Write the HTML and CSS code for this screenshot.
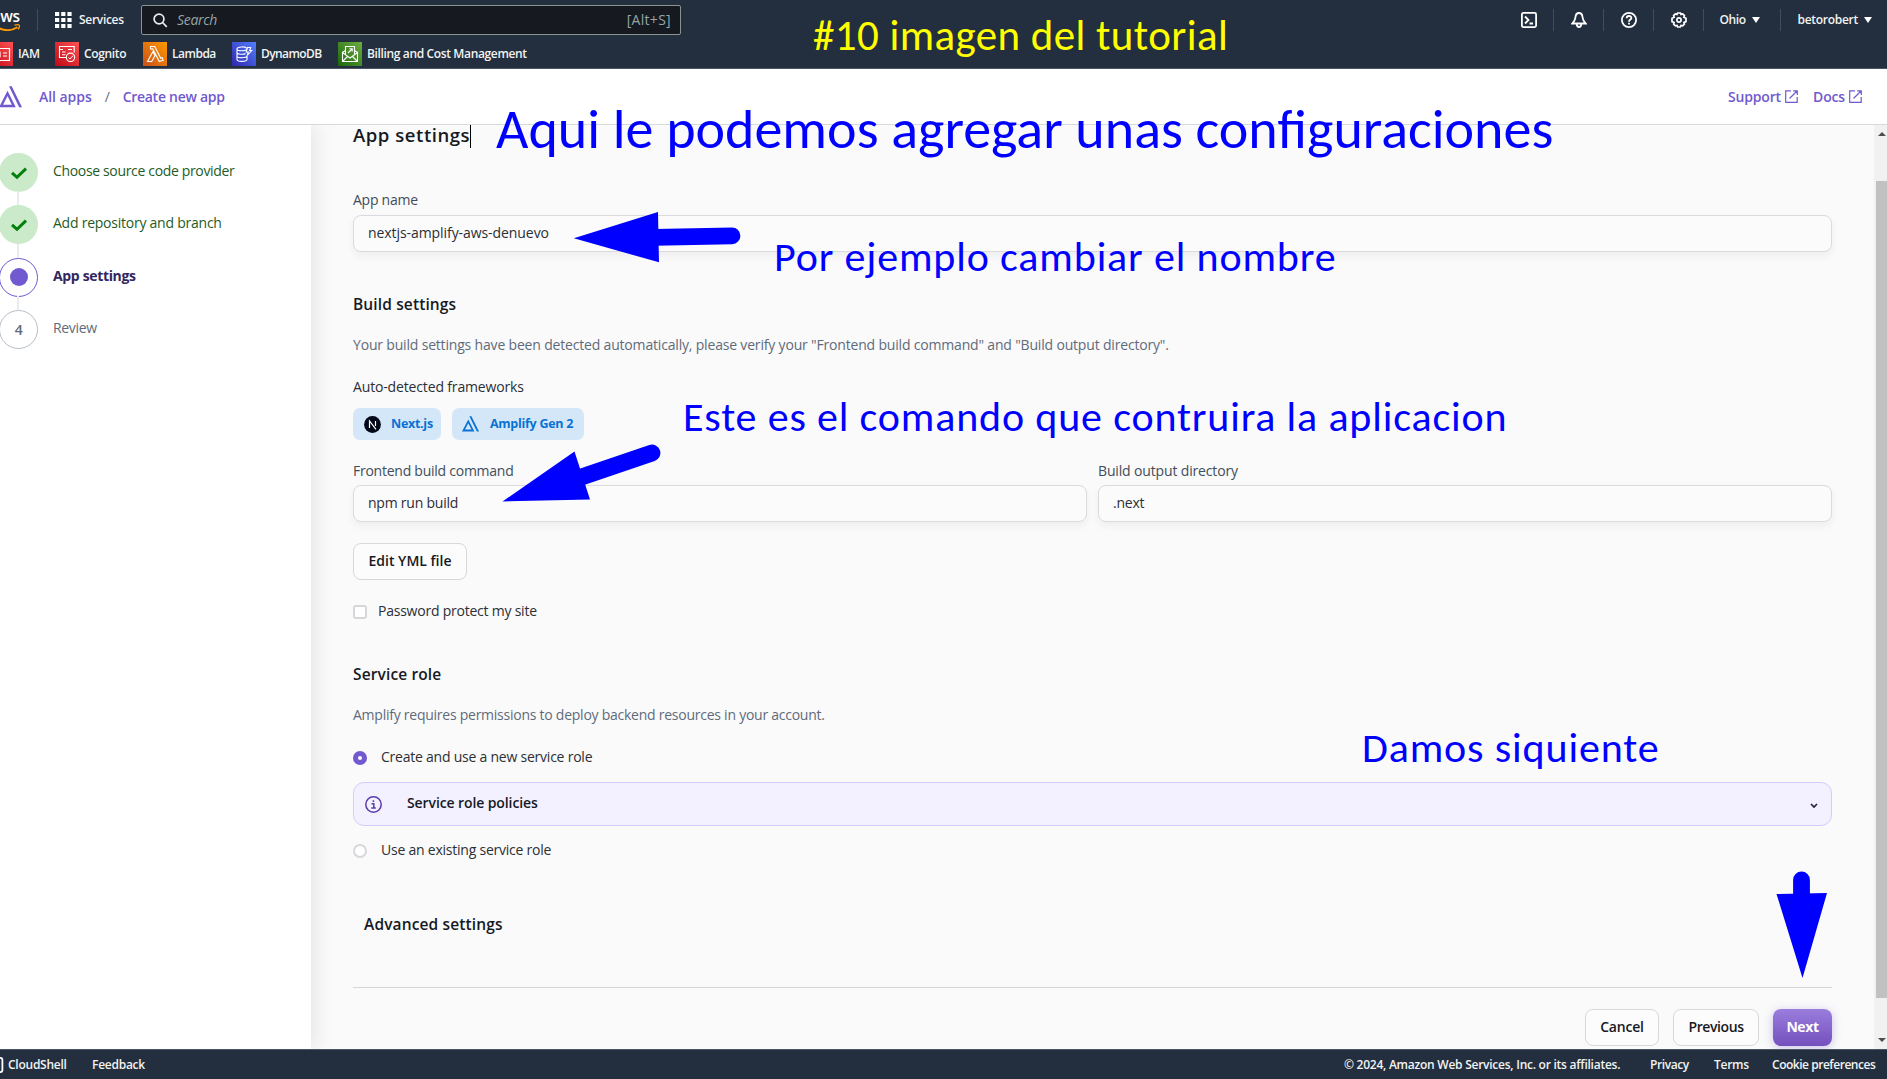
FILE: index.html
```html
<!DOCTYPE html>
<html lang="en">
<head>
<meta charset="utf-8">
<title>AWS Amplify - Create new app</title>
<link rel="stylesheet" href="styles.css">
</head>
<body>
<svg class="defs" aria-hidden="true">
  <defs>
    <linearGradient id="red" x1="0" y1="1" x2="1" y2="0"><stop stop-color="#bd0816"/><stop offset="1" stop-color="#ff5252"/></linearGradient>
    <linearGradient id="orange" x1="0" y1="1" x2="1" y2="0"><stop stop-color="#c8511b"/><stop offset="1" stop-color="#ff9900"/></linearGradient>
    <linearGradient id="blue" x1="0" y1="1" x2="1" y2="0"><stop stop-color="#2e27ad"/><stop offset="1" stop-color="#527fff"/></linearGradient>
    <linearGradient id="green" x1="0" y1="1" x2="1" y2="0"><stop stop-color="#1b660f"/><stop offset="1" stop-color="#6cae3e"/></linearGradient>
    <symbol id="external" viewBox="0 0 13 13"><path d="M6 .8H.7v11.5h11.5V7M8 .8h4.3V5M12 1 4.5 8.5" fill="none" stroke="currentColor" stroke-width="1.2"/></symbol>
    <symbol id="check" viewBox="0 0 18 14"><path d="M2 6.8 7 11.3 16 2.6" fill="none" stroke="#037f0c" stroke-width="3"/></symbol>
    <symbol id="amplify" viewBox="0 0 17 16" preserveAspectRatio="none"><path d="M7.400.2h2L17 15.500h-2.100ZM6.300 3.500 12.400 15.500H0ZM6.300 7.300 3 13.600H9.500Z" fill="currentColor" fill-rule="evenodd"/></symbol>
  </defs>
</svg>

<header class="top">
  <div class="bar">
    <svg class="logo" width="21" height="20" viewBox="0 0 21 20"><text x="19.5" y="10.5" text-anchor="end" class="logo-text">aws</text><path d="M-4 15.5C3 20 11 20 17.5 16.2" fill="none" stroke="#f90" stroke-width="1.9"/><path d="M14.5 14.2c2-.6 4-.6 4.6-.1.6.6.1 2.700-1.100 4.300" fill="none" stroke="#f90" stroke-width="1.300"/></svg>
    <i class="sep"></i>
    <svg class="grid-icon" width="17" height="16" viewBox="0 0 17 16" fill="#fff"><path d="M0 0h4.200v4H0zM6.200 0h4.200v4H6.200zM12.400 0h4.200v4h-4.200zM0 6h4.200v4H0zM6.200 6h4.200v4H6.200zM12.400 6h4.200v4h-4.200zM0 12h4.200v4H0zM6.200 12h4.200v4H6.200zM12.400 12h4.200v4h-4.200z"/></svg>
    <span class="services">Services</span>
    <div class="search">
      <svg width="15" height="15" viewBox="0 0 15 15" fill="none" stroke="#eaeded" stroke-width="1.700"><circle cx="6" cy="6" r="4.900"/><path d="m9.500 9.500 4.300 4.300"/></svg>
      <em>Search</em><span>[Alt+S]</span>
    </div>
    <nav class="tools">
      <svg width="16" height="16" viewBox="0 0 16 16" fill="none" stroke="#fff" stroke-width="1.800"><rect x=".9" y=".9" width="14.200" height="14.200" rx="1.500"/><path d="M4 4.500 7.500 8 4 11.500M8.500 11.500H12"/></svg>
      <i class="sep"></i>
      <svg width="16" height="16" viewBox="0 0 16 16" fill="none" stroke="#fff" stroke-width="1.800"><path d="M8 1C5.500 1 4.600 3 4.400 5.500 4.200 8 3.200 9.500 1.300 11.500h13.400c-1.900-2-2.900-3.500-3.100-6C11.400 3 10.500 1 8 1Z"/><path d="M5.800 12c0 4 4.400 4 4.400 0"/></svg>
      <i class="sep"></i>
      <svg width="16" height="16" viewBox="0 0 16 16" fill="none" stroke="#fff" stroke-width="1.800"><circle cx="8" cy="8" r="7.100"/><path d="M5.700 6.300C5.700 3.200 10.400 3.400 10.400 6 10.400 7.600 8 7.600 8 9.700M8 10.800v1.800"/></svg>
      <i class="sep"></i>
      <svg width="16" height="16" viewBox="0 0 16 16" fill="none" stroke="#fff" stroke-width="1.700"><path d="M6.600 1h2.800l.6 1.400 1.700-.5 1.700 1.700-.5 1.700 2.100.9v3.400l-2.100.8.5 1.700-1.700 1.700-1.700-.4-.7 1.600H6.600L6 13.400l-1.700.4-1.700-1.700.5-1.700L1 9.600V6.200l2.100-.9-.5-1.700L4.300 1.900 6 2.400Z"/><circle cx="8" cy="8" r="2.100"/></svg>
      <i class="sep"></i>
      <span class="menu region">Ohio<b></b></span>
      <i class="sep"></i>
      <span class="menu user">betorobert<b></b></span>
    </nav>
  </div>
  <div class="favorites">
    <a class="fav iam"><svg width="24" height="24" viewBox="0 0 24 24"><path fill="url(#red)" d="M0 0h24v24H0z"/><path d="M4 6.500h16.500v12H4zM7 10h4v5H7zM14 11h4M14 14h4" fill="none" stroke="#fff" stroke-width="1.200"/></svg>IAM</a>
    <a class="fav cognito"><svg width="24" height="24" viewBox="0 0 24 24"><path fill="url(#red)" d="M0 0h24v24H0z"/><path d="M11.500 15.500h-7v-11h14.700v6M4.500 7.500H8M7 10h3.500M7 12.700h3.500M13 7.500h4" fill="none" stroke="#fff" stroke-width="1.100"/><circle cx="15.500" cy="15.300" r="4.200" fill="none" stroke="#fff" stroke-width="1.100"/><path d="m13.500 15.500 1.500 1.500 3-3.300" fill="none" stroke="#fff"/></svg>Cognito</a>
    <a class="fav lambda"><svg width="24" height="24" viewBox="0 0 24 24"><path fill="url(#orange)" d="M0 0h24v24H0z"/><path d="M4.500 19.500 10 9.500l2 4.200-3.300 5.800ZM7.500 4.500h4.200l6 11.800 1.500-.6 1 2.500-3.900 1.300-6.600-12.600H7.500Z" fill="none" stroke="#fff" stroke-width="1.100"/></svg>Lambda</a>
    <a class="fav dynamo"><svg width="24" height="24" viewBox="0 0 24 24"><path fill="url(#blue)" d="M0 0h24v24H0z"/><g fill="none" stroke="#fff" stroke-width="1.100"><path d="M14.500 7C14.500 9.300 5 9.300 5 7S14 4 14.500 6.500M5 7v10.500c0 2.500 10 2.500 10 0v-4M5 10.500c0 2 7 2.300 8.500 1M5 14c0 2.300 10 2.300 10 0"/><path d="M15.500 5.500h3.200l-1 3h2l-4.500 5 1-3.500h-2z"/></g></svg>DynamoDB</a>
    <a class="fav billing"><svg width="24" height="24" viewBox="0 0 24 24"><path fill="url(#green)" d="M0 0h24v24H0z"/><g fill="none" stroke="#fff" stroke-width="1.100"><path d="M7.500 12.500v-8h9v8M4.500 10.500v9h15v-9L12 16ZM4.500 19.500l5-5M19.500 19.500l-5-5M10 11l4-4M11.500 6.800h2.700v2.700M7.500 8.500l-3 2M16.500 8.500l3 2"/></g></svg>Billing and Cost Management</a>
  </div>
</header>

<div class="crumbs">
  <svg class="amplify" width="23" height="22"><use href="#amplify"/></svg>
  <a class="all">All apps</a><i>/</i><a class="create">Create new app</a>
  <div class="links"><a>Support<svg width="13" height="13"><use href="#external"/></svg></a><a>Docs<svg width="13" height="13"><use href="#external"/></svg></a></div>
</div>

<div class="body">
  <aside>
    <ol class="steps">
      <li class="done"><span class="dot"><svg width="18" height="14"><use href="#check"/></svg></span>Choose source code provider</li>
      <li class="done"><span class="dot"><svg width="18" height="14"><use href="#check"/></svg></span>Add repository and branch</li>
      <li class="current"><span class="dot"><i></i></span>App settings</li>
      <li class="todo"><span class="dot">4</span>Review</li>
    </ol>
  </aside>
  <main>
    <h1>App settings<i class="caret"></i></h1>
    <div class="label name">App name</div>
    <div class="input full">nextjs-amplify-aws-denuevo</div>
    <h2 class="build">Build settings</h2>
    <p class="desc">Your build settings have been detected automatically, please verify your "Frontend build command" and "Build output directory".</p>
    <div class="auto">Auto-detected frameworks</div>
    <div class="badges">
      <span class="badge next"><svg width="17" height="17" viewBox="0 0 17 17"><circle cx="8.500" cy="8.500" r="8.400" fill="#000716"/><path d="M5.500 12V5l6.500 8.300M11.500 5v5" fill="none" stroke="#fff" stroke-width="1.200"/></svg>Next.js</span>
      <span class="badge gen"><svg width="17" height="16"><use href="#amplify"/></svg>Amplify Gen 2</span>
    </div>
    <div class="columns">
      <div><div class="label">Frontend build command</div><div class="input command">npm run build</div></div>
      <div><div class="label output">Build output directory</div><div class="input command">.next</div></div>
    </div>
    <button class="btn edit">Edit YML file</button>
    <div class="option protect"><i class="box"></i>Password protect my site</div>
    <h2 class="role">Service role</h2>
    <p class="desc perms">Amplify requires permissions to deploy backend resources in your account.</p>
    <div class="option radio first"><i class="on"></i>Create and use a new service role</div>
    <div class="alert">
      <svg width="17" height="17" viewBox="0 0 17 17" fill="none" stroke="#5c3ba8" stroke-width="1.500"><circle cx="8.500" cy="8.500" r="7.700"/><path d="M6.500 7.800h2.300v4M6.300 12h4.500M8.400 4.300v1.700"/></svg>
      <span>Service role policies</span>
      <svg class="chev" width="8" height="6" viewBox="0 0 8 6"><path d="m1 1 3 3 3-3" fill="none" stroke="#23203a" stroke-width="1.700"/></svg>
    </div>
    <div class="option radio second"><i></i>Use an existing service role</div>
    <h2 class="advanced">Advanced settings</h2>
    <hr>
    <div class="actions"><button class="btn cancel">Cancel</button><button class="btn prev">Previous</button><button class="btn primary">Next</button></div>
  </main>
  <div class="scroll"><i class="up"></i><b></b><i class="down"></i></div>
</div>

<footer>
  <svg width="4" height="16" viewBox="12 0 4 16" fill="none" stroke="#fff" stroke-width="1.800"><rect x=".9" y=".9" width="13.500" height="14.200" rx="2"/></svg>
  <span class="shell">CloudShell</span><span>Feedback</span>
  <div class="legal"><span class="copy">© 2024, Amazon Web Services, Inc. or its affiliates.</span><span class="privacy">Privacy</span><span class="terms">Terms</span><span class="cookie">Cookie preferences</span></div>
</footer>

<div class="note title">#10 imagen del tutorial</div>
<div class="note n1">Aqui le podemos agregar unas configuraciones</div>
<div class="note n2">Por ejemplo cambiar el nombre</div>
<div class="note n3">Este es el comando que contruira la aplicacion</div>
<div class="note n4">Damos siquiente</div>
<svg class="arrows" viewBox="0 0 1887 1079" fill="#00f" stroke="#00f">
  <g stroke="none"><path d="M573.800 238.300 658 212l1 50.300ZM502.500 501.500l72-50 15.500 48ZM1802.500 978l-26-84 50.500-1Z"/></g>
  <path d="m655 237.300 77-1.500M580 477.500l72-24.500M1801.500 896v-16" stroke-width="16.800" stroke-linecap="round"/>
</svg>
</body>
</html>
```
FILE: styles.css
```css
* { box-sizing: border-box; }
body {
  margin: 0;
  width: 1887px;
  height: 1079px;
  overflow: hidden;
  position: relative;
  display: flex;
  flex-direction: column;
  font: 400 14px/20px "Open Sans", "Noto Sans", sans-serif;
  letter-spacing: -0.18px;
  color: #2b2f36;
  background: #fff;
}
svg { flex: none; display: block; }
.defs { position: absolute; width: 0; height: 0; }
h1, h2, p, ol { margin: 0; padding: 0; }

/* Console header */
.top {
  height: 69px;
  flex: none;
  background: #232f3e;
  border-bottom: 1px solid #4b5563;
  color: #f2f3f3;
  font-size: 12px;
  font-weight: 600;
  letter-spacing: -0.36px;
}
.bar { height: 40px; display: flex; align-items: center; }
.sep { width: 1px; height: 22px; background: #414d5c; flex: none; }
.logo { margin: 2px 16px 0 0; overflow: hidden; }
.logo-text { font: 600 15.500px "Open Sans", sans-serif; letter-spacing: -0.5px; fill: #fff; }
.grid-icon { margin-left: 17px; }
.services { margin-left: 7px; width: 62px; letter-spacing: -0.3px; }
.search {
  width: 540px;
  height: 30px;
  display: flex;
  align-items: center;
  padding: 0 9px 0 11px;
  background: #161920;
  border: 1px solid #87958f;
  border-radius: 2px;
  font-size: 14px;
  font-weight: 400;
  color: #95a5a6;
}
.search em { margin-left: 9px; letter-spacing: -0.3px; }
.search span { margin-left: auto; letter-spacing: 0.3px; }
.tools { margin-left: auto; display: flex; align-items: center; padding-right: 15px; }
.tools svg + .sep { margin: 0 17px 0 16px; }
.tools svg:nth-of-type(4) + .sep { margin-right: 0; }
.menu { display: flex; align-items: center; }
.menu b { border: 4px solid transparent; border-top: 6px solid #fff; border-bottom: 0; margin-left: 6px; }
.region { padding-left: 16px; width: 76px; }
.user { padding-left: 17px; letter-spacing: -0.28px; }
.favorites { display: flex; height: 28px; align-items: center; }
.fav { display: flex; align-items: center; gap: 5px; }
.iam { margin-left: -11px; width: 66px; }
.cognito { width: 88px; }
.lambda { width: 89px; letter-spacing: -0.5px; }
.dynamo { width: 106px; letter-spacing: -0.6px; }

/* Breadcrumbs */
.crumbs {
  height: 56px;
  flex: none;
  display: flex;
  align-items: center;
  border-bottom: 1px solid #d5dbdb;
  color: #7159cf;
  font-weight: 600;
}
.amplify { margin-left: -1px; }
.crumbs .all { margin-left: 17px; letter-spacing: -0.05px; }
.crumbs i { font-style: normal; font-weight: 400; color: #687078; margin: 0 13px; }
.crumbs .create { letter-spacing: -0.28px; }
.links { margin-left: auto; padding-right: 25px; display: flex; gap: 15px; letter-spacing: -0.15px; }
.links a { display: flex; align-items: center; gap: 4px; }

/* Page body */
.body { height: 924px; flex: none; display: flex; overflow: hidden; background: #fafafa; }
aside { width: 311px; background: #fff; box-shadow: 4px 0 20px rgba(0, 0, 0, 0.09); padding-top: 28px; }
.steps { list-style: none; margin-left: -1px; }
.steps li { height: 52.400px; display: flex; gap: 15px; letter-spacing: -0.34px; line-height: 35px; position: relative; }
.steps li:nth-child(2) { letter-spacing: -0.24px; }
.steps li + li::before { content: ""; position: absolute; left: 18px; top: -14px; width: 2px; height: 14px; background: #e9ebed; }
.dot { width: 39px; height: 39px; border-radius: 50%; display: flex; align-items: center; justify-content: center; }
.done { color: #1d5c25; }
.done .dot { background: #caeaca; }
.current { color: #33265f; font-weight: 700; }
.current .dot { border: 1px solid #7159cf; }
.current .dot i { width: 18px; height: 18px; border-radius: 50%; background: #7159cf; }
.todo { color: #5f6b7a; }
.todo .dot { border: 1px solid #b6bec9; font-weight: 600; }

main { flex: none; width: 1521px; padding-left: 42px; }
h1 { height: 21px; font-size: 18.500px; line-height: 19px; font-weight: 600; letter-spacing: 0.55px; color: #16191f; display: flex; }
.caret { width: 1px; height: 23px; flex: none; background: #000; }
h2 { font-size: 15.500px; line-height: 20px; font-weight: 600; letter-spacing: 0.13px; color: #16191f; }
.label { color: #414d5c; letter-spacing: -0.25px; }
.output { letter-spacing: -0.15px; }
.name { margin-top: 44px; }
.input {
  height: 37px;
  margin-top: 4px;
  padding-left: 14px;
  line-height: 34px;
  border: 1px solid #d9dbde;
  border-radius: 8px;
  background: #fbfbfb;
  box-shadow: 0 4px 8px rgba(0, 0, 0, 0.05);
  letter-spacing: -0.07px;
}
.command { letter-spacing: -0.23px; }
.full { margin-top: 5px; }
.build { margin-top: 42px; }
.desc { margin-top: 21px; color: #5f6b7a; }
.perms { letter-spacing: -0.25px; }
.auto { margin-top: 22px; letter-spacing: -0.15px; }
.badges { display: flex; gap: 11px; margin-top: 11px; }
.badge { height: 32px; display: flex; align-items: center; background: #d3e7f9; border-radius: 7px; color: #0972d3; font-size: 12.500px; font-weight: 700; letter-spacing: -0.28px; }
.next { width: 88px; padding-left: 11px; gap: 10px; }
.gen { width: 132px; padding-left: 10px; gap: 11px; }
.columns { display: grid; grid-template-columns: 1fr 1fr; gap: 11px; margin-top: 21px; }
.btn { height: 37px; padding: 0 0 2px; border: 1px solid #d5d9dc; border-radius: 8px; background: #fcfcfc; font: inherit; font-weight: 600; letter-spacing: 0; color: #16191f; }
.edit { display: block; width: 114px; margin-top: 21px; }
.option { display: flex; align-items: center; letter-spacing: -0.23px; }
.option i { width: 14px; height: 14px; border: 2px solid #d5d7da; border-radius: 3px; background: #fff; margin-top: 2px; }
.protect { margin-top: 21px; gap: 11px; }
.radio { gap: 14px; }
.radio i { border-radius: 50%; }
.radio .on { border: 5px solid #7159cf; }
.role { margin-top: 43px; }
.first { margin-top: 22px; }
.alert {
  height: 44px;
  margin-top: 15px;
  padding: 0 13px 0 11px;
  display: flex;
  align-items: center;
  background: #f3f1ff;
  border: 1px solid #d4cdfa;
  border-radius: 11px;
  font-weight: 600;
  letter-spacing: -0.1px;
  color: #16191f;
}
.alert span { margin: -3px 0 0 25px; }
.chev { margin-left: auto; margin-top: 3px; }
.second { margin-top: 14px; }
.advanced { margin: 54px 0 0 11px; }
hr { height: 1px; border: 0; background: #d5d7d9; margin: 53px 0 0; }
.actions { display: flex; justify-content: flex-end; margin-top: 21px; }
.cancel { width: 74px; margin-right: 14px; letter-spacing: -0.2px; }
.prev { width: 86px; margin-right: 14px; letter-spacing: -0.4px; }
.primary { width: 59px; border: 0; background: linear-gradient(#9a7ddd, #7450bd); color: #fff; font-weight: 700; letter-spacing: -0.4px; box-shadow: 0 2px 10px rgba(113, 89, 207, 0.35); }

.scroll { width: 13px; margin-left: auto; background: #f1f1f1; padding-left: 2px; display: flex; flex-direction: column; }
.scroll b { height: 817px; margin-top: 45px; background: #c1c1c1; }
.scroll b, .scroll i { flex: none; }
.scroll .up, .scroll .down { align-self: flex-start; margin-left: 2px; border: 4px solid transparent; }
.scroll .up { border-top: 0; border-bottom-color: #4d4d4d; margin-top: 7px; }
.scroll .down { border-bottom: 0; border-top-color: #4d4d4d; margin-top: 40px; }

/* Footer */
footer { height: 30px; flex: none; display: flex; align-items: center; background: #232f3e; border-top: 1px solid #4b5563; color: #f2f3f3; font-size: 12px; font-weight: 600; letter-spacing: -0.25px; }
.shell { margin-left: 4px; width: 84px; }
.legal { margin-left: auto; display: flex; }
.copy { width: 306px; }
.privacy { width: 64px; letter-spacing: -0.4px; }
.terms { width: 58px; }
.cookie { width: 115px; letter-spacing: -0.47px; }

/* Annotations laid over the page */
.note { position: absolute; white-space: nowrap; color: #00f; font-family: Carlito, "Open Sans", sans-serif; font-size: 42px; line-height: 50px; letter-spacing: 0.8px; }
.title { left: 813px; top: 11px; color: #ff0; font-size: 43px; letter-spacing: 0.42px; }
.n1 { left: 496px; top: 99px; font-size: 56px; line-height: 60px; letter-spacing: 0; }
.n2 { left: 774px; top: 232px; letter-spacing: 0.85px; }
.n3 { left: 683px; top: 392px; letter-spacing: 0.84px; }
.n4 { left: 1362px; top: 723px; letter-spacing: 0.86px; }
.arrows { position: absolute; left: 0; top: 0; width: 1887px; height: 1079px; pointer-events: none; }
```
